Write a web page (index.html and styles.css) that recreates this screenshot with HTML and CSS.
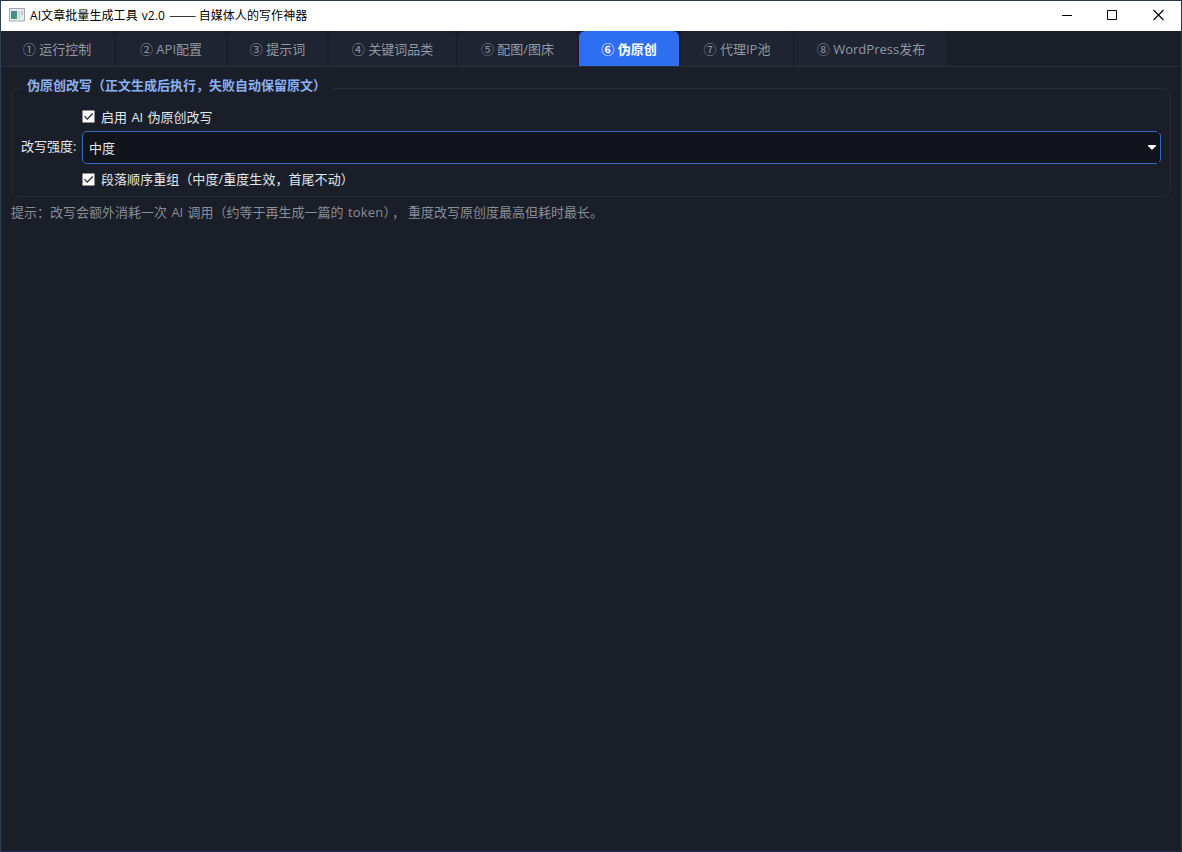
FILE: index.html
```html
<!DOCTYPE html>
<html lang="zh-CN">
<head>
<meta charset="utf-8">
<title>AI文章批量生成工具 v2.0</title>
<link rel="stylesheet" href="styles.css">
</head>
<body>
<div class="window">
  <header class="titlebar">
    <svg class="app-icon" width="16" height="14" viewBox="0 0 16 14">
      <defs><linearGradient id="g" x1="0" y1="0" x2="1" y2="1"><stop offset="0" stop-color="#4a7fa0"/><stop offset="1" stop-color="#3fa06c"/></linearGradient></defs>
      <rect x=".5" y=".5" width="15" height="12.500" fill="#e9ebed" stroke="#a3a8ad"/>
      <rect x="2" y="3" width="6" height="8" fill="url(#g)"/>
      <rect x="9" y="3" width="2" height="8" fill="#cfd5da"/>
      <rect x="12" y="3" width="2" height="4" fill="#c3cad0"/>
    </svg>
    <h1 class="title">AI文章批量生成工具 v2.0 <span class="dash">——</span> 自媒体人的写作神器</h1>
    <div class="controls">
      <svg width="46" height="30" viewBox="0 0 46 30"><path d="M18 14.500h10" stroke="#000"/></svg>
      <svg width="46" height="30" viewBox="0 0 46 30"><path d="M17.500 9.500h9v9h-9z" fill="none" stroke="#000"/></svg>
      <svg width="46" height="30" viewBox="0 0 46 30"><path d="M17.500 9l10 10M27.500 9l-10 10" stroke="#000" stroke-width="1.100"/></svg>
    </div>
  </header>
  <nav class="tabs">
    <div class="tab t1">① 运行控制</div>
    <div class="tab t2">② API配置</div>
    <div class="tab t3">③ 提示词</div>
    <div class="tab t4">④ 关键词品类</div>
    <div class="tab t5">⑤ 配图/图床</div>
    <div class="tab t6 active">⑥ 伪原创</div>
    <div class="tab t7">⑦ 代理IP池</div>
    <div class="tab t8">⑧ WordPress发布</div>
  </nav>
  <main class="page">
    <fieldset class="group">
      <legend class="group-title">伪原创改写（正文生成后执行，失败自动保留原文）</legend>
      <div class="form">
        <div class="check first">
          <svg width="13" height="13" viewBox="0 0 13 13"><path d="M.5.500h12v12H.5z" fill="#fff"/><path d="M2.500 6.200l2.700 2.900 5.500-5.600" fill="none" stroke="#222" stroke-width="1.200"/></svg>
          <span>启用 AI 伪原创改写</span>
        </div>
        <span class="label">改写强度:</span>
        <div class="select">
          <span>中度</span>
          <svg width="8" height="5" viewBox="0 0 8 5"><path d="M0 0h8v1L4.500 4.500h-1L0 1z" fill="#fff"/></svg>
        </div>
        <div class="check second">
          <svg width="13" height="13" viewBox="0 0 13 13"><path d="M.5.500h12v12H.5z" fill="#fff"/><path d="M2.500 6.200l2.700 2.900 5.500-5.600" fill="none" stroke="#222" stroke-width="1.200"/></svg>
          <span>段落顺序重组（中度/重度生效，首尾不动）</span>
        </div>
      </div>
    </fieldset>
    <p class="hint">提示：改写会额外消耗一次 AI 调用（约等于再生成一篇的 <span class="latin">token</span>）<span class="comma">，</span>重度改写原创度最高但耗时最长。</p>
  </main>
</div>
</body>
</html>
```
FILE: styles.css
```css
* { box-sizing: border-box; }
body {
  margin: 0;
  font: 13px/18px "Open Sans", "Noto Sans CJK SC", sans-serif;
  color: #e3e6ec;
  white-space: nowrap;
}
.window {
  width: 1182px;
  height: 852px;
  display: flex;
  flex-direction: column;
  background: #1a1e28;
  border: 1px solid #24384a;
  border-left-color: #2b4258;
  border-bottom-color: #242e54;
  overflow: hidden;
}
.titlebar {
  flex: none;
  height: 30px;
  display: flex;
  align-items: center;
  padding-left: 8px;
  background: #fff;
  color: #000;
}
.app-icon { margin-top: -2px; }
.title {
  margin: 0 0 0 5px;
  padding-bottom: 2px;
  font-size: 12px;
  font-weight: 400;
  word-spacing: 0.7px;
  letter-spacing: 0.08px;
}
.dash {
  font-family: "Noto Sans CJK SC", sans-serif;
  letter-spacing: 0;
  display: inline-block;
  width: 26px;
  transform: scaleX(1.36);
  transform-origin: left;
}
.controls { display: flex; margin-left: auto; margin-right: -1px; }
.tabs {
  flex: none;
  height: 36px;
  display: flex;
  gap: 2px;
  padding-left: 1px;
  border-bottom: 1px solid #2a2e39;
}
.tab {
  display: flex;
  justify-content: center;
  align-items: center;
  border-radius: 6px 6px 0 0;
  background: #1e2431;
  color: #9298a4;
  white-space: pre;
}
.t1 { width: 112px; padding-right: 2px; }
.t2 { width: 110px; }
.t3 { width: 99px; }
.t4 { width: 127px; }
.t5 { width: 119px; }
.t6 { width: 100px; }
.t7 { width: 112px; }
.t8 { width: 152px; }
.tab.active { background: #2e6ef0; color: #fff; font-weight: 700; }
.page { padding: 9px 10px 0; }
.group {
  margin: 0;
  padding: 0 9px;
  height: 121px;
  border: 1px solid #272b36;
  border-radius: 8px;
  min-width: 0;
}
.group-title {
  margin-left: 0;
  padding: 0 6px 7px 6px;
  color: #8ab0f5;
  font-weight: 700;
}
.form {
  display: grid;
  grid-template-columns: 55px 1079px;
  column-gap: 6px;
  grid-template-rows: 30px 33px 30px;
}
.check {
  grid-column: 2;
  display: flex;
  align-items: center;
  gap: 6px;
}
.first { padding-top: 1px; word-spacing: 1px; }
.second { letter-spacing: 0.05px; }
.label { align-self: center; padding-bottom: 3px; }
.select {
  position: relative;
  display: flex;
  align-items: center;
  justify-content: space-between;
  padding: 0 4px 0 6px;
  background: #12141d;
  border: 1px solid #3569c8;
  border-radius: 5px;
}
.select::before,
.select::after {
  content: "";
  position: absolute;
  right: -1px;
  width: 4px;
  height: 2px;
  background: #151821;
}
.select::before { top: -1px; }
.select::after { bottom: -1px; }
.hint { margin: 6px 0 0; color: #888d98; word-spacing: 1px; }
.latin { letter-spacing: 0.2px; }
.comma { margin: 0 3px 0 2px; }
```
